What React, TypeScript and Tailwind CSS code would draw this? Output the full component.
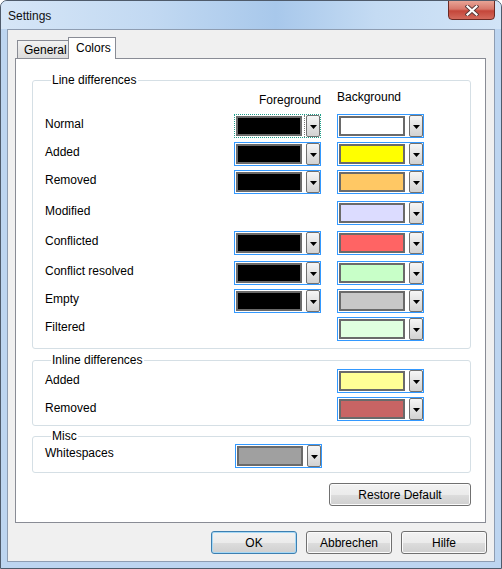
import React from 'react';

type Row = { label: string; fg?: string; bg: string; gap: string };

const lineRows: Row[] = [
  { label: 'Normal', fg: 'bg-black', bg: 'bg-white', gap: 'mt-[8px]' },
  { label: 'Added', fg: 'bg-black', bg: 'bg-[#ffff00]', gap: 'mt-[4px]' },
  { label: 'Removed', fg: 'bg-black', bg: 'bg-[#ffc864]', gap: 'mt-[4px]' },
  { label: 'Modified', bg: 'bg-[#dcdcff]', gap: 'mt-[7px]' },
  { label: 'Conflicted', fg: 'bg-black', bg: 'bg-[#ff6464]', gap: 'mt-[6px]' },
  { label: 'Conflict resolved', fg: 'bg-black', bg: 'bg-[#c8ffc8]', gap: 'mt-[6px]' },
  { label: 'Empty', fg: 'bg-black', bg: 'bg-[#c8c8c8]', gap: 'mt-[4px]' },
  { label: 'Filtered', bg: 'bg-[#e0ffe0]', gap: 'mt-[4px]' },
];

const DropButton = () => (
  <div className="flex h-[22px] w-[14px] items-center justify-center rounded-[2px] border border-[#707070] bg-gradient-to-b from-[#f6f6f6] to-[#d2d2d2]">
    <svg width="7" height="4" viewBox="0 0 7 4" className="mt-px">
      <path d="M0 0h7L3.5 4z" fill="#000" />
    </svg>
  </div>
);

const ColorCombo = ({ swatch, focused }: { swatch: string; focused?: boolean }) => (
  <div
    className={
      focused
        ? 'flex h-[24px] w-[87px] items-center border border-dotted border-[#1f9e8a] bg-white'
        : 'flex h-[24px] w-[87px] items-center border border-[#3399ff] bg-white'
    }
  >
    <div className={'ml-px h-[20px] w-[66px] border-2 border-[#6a6a6a] ' + swatch} />
    <div className="flex h-[22px] w-[4px] justify-center">
      {focused && <div className="h-full border-l border-dotted border-[#7a7a7a]" />}
    </div>
    <DropButton />
  </div>
);

const Group = ({ title, className, children }: { title: string; className?: string; children: React.ReactNode }) => (
  <fieldset className={'rounded-[3px] border border-[#d5dfe5] ' + (className ?? '')}>
    <legend className="ml-[6px] px-px leading-[14px]">{title}</legend>
    {children}
  </fieldset>
);

const WinButton = ({ label, primary, wide }: { label: string; primary?: boolean; wide?: boolean }) => (
  <button
    className={
      (wide ? 'w-[142px] ' : 'w-[86px] ') +
      (primary
        ? 'border-[#3c7fb1] shadow-[inset_0_0_0_1px_#a6d8f5] '
        : 'border-[#707070] shadow-[inset_0_0_0_1px_#fbfbfb] ') +
      'h-[23px] rounded-[3px] border bg-[linear-gradient(#f2f2f2_0%,#ebebeb_50%,#dddddd_51%,#cfcfcf_100%)] text-[12px] leading-[14px] text-black'
    }
  >
    {label}
  </button>
);

export default function App() {
  return (
    <div className="flex h-[569px] w-[502px] flex-col overflow-hidden rounded-t-[7px] border border-[#4f5b6b] bg-[#bdd5f0] font-['Liberation_Sans',Arial,sans-serif] text-[12px] text-black">
      {/* title bar */}
      <div className="flex h-[28px] shrink-0 items-start justify-between bg-[linear-gradient(90deg,#d6e6f7_0%,#c2d9f2_30%,#a8c8eb_55%,#c4dbf3_75%,#d2e4f7_100%)] pl-[7px] pr-[6px]">
        <span className="pt-[8px] leading-[14px] text-[#101010]">Settings</span>
        <div className="-mt-px flex h-[20px] w-[47px] items-center justify-center rounded-b-[4px] border border-[#6b2a24] bg-[linear-gradient(#e8a496_0%,#d7776a_45%,#c4463a_55%,#d36a5c_100%)]">
          <svg width="14" height="11" viewBox="0 0 14 11">
            <path d="M2.5 1.5l9 8M11.5 1.5l-9 8" stroke="#5a3a3a" strokeWidth="4" strokeLinecap="square" />
            <path d="M2.5 1.5l9 8M11.5 1.5l-9 8" stroke="#ffffff" strokeWidth="2.2" strokeLinecap="square" />
          </svg>
        </div>
      </div>

      <div className="flex flex-1 flex-col px-[6px] pb-[6px]">
        <div className="flex flex-1 flex-col border border-[#8e9db2] bg-[#f0f0f0] px-[7px] pt-[7px] pb-[7px]">
          {/* tabs */}
          <div className="flex h-[21px] items-end pl-[2px]">
            <div className="flex h-[18px] w-[52px] items-center border border-b-0 border-[#898c95] bg-gradient-to-b from-[#f2f2f2] to-[#dcdcdc] pl-[6px] leading-[14px]">
              General
            </div>
            <div className="relative z-10 -mb-px -ml-px flex h-[22px] w-[48px] items-start border border-b-0 border-[#898c95] bg-white pl-[7px] pt-[3px] leading-[14px]">
              Colors
            </div>
          </div>

          {/* panel */}
          <div className="mr-px flex h-[465px] flex-col border border-[#898c95] bg-white pl-[16px] pr-[14px] pt-[14px]">
            <Group title="Line differences" className="pb-[7px] pl-[12px]">
              <div className="mt-[3px] flex h-[16px] items-start">
                <div className="w-[189px]" />
                <div className="w-[87px] pt-[3px] text-right leading-[14px]">Foreground</div>
                <div className="ml-[16px] leading-[14px]">Background</div>
              </div>
              {lineRows.map((r) => (
                <div key={r.label} className={'flex h-[24px] items-center ' + r.gap}>
                  <span className="mb-[5px] w-[189px] leading-[14px]">{r.label}</span>
                  <div className="w-[87px]">{r.fg && <ColorCombo swatch={r.fg} focused={r.label === 'Normal'} />}</div>
                  <div className="ml-[16px]">
                    <ColorCombo swatch={r.bg} />
                  </div>
                </div>
              ))}
            </Group>

            <Group title="Inline differences" className="mt-[4px] pb-[4px] pl-[12px]">
              <div className="mt-[2px] flex h-[24px] items-center">
                <span className="mb-[3px] w-[292px] leading-[14px]">Added</span>
                <ColorCombo swatch="bg-[#ffff96]" />
              </div>
              <div className="mt-[4px] flex h-[24px] items-center">
                <span className="mb-[3px] w-[292px] leading-[14px]">Removed</span>
                <ColorCombo swatch="bg-[#c86464]" />
              </div>
            </Group>

            <Group title="Misc" className="mt-[3px] pb-[4px] pl-[12px]">
              <div className="mt-px flex h-[24px] items-center">
                <span className="mb-[6px] w-[190px] leading-[14px]">Whitespaces</span>
                <ColorCombo swatch="bg-[#a0a0a0]" />
              </div>
            </Group>

            <div className="mt-[10px] flex justify-end">
              <WinButton label="Restore Default" wide />
            </div>
          </div>

          {/* dialog buttons */}
          <div className="mt-[8px] flex justify-end gap-[9px]">
            <WinButton label="OK" primary />
            <WinButton label="Abbrechen" />
            <WinButton label="Hilfe" />
          </div>
        </div>
      </div>
    </div>
  );
}
